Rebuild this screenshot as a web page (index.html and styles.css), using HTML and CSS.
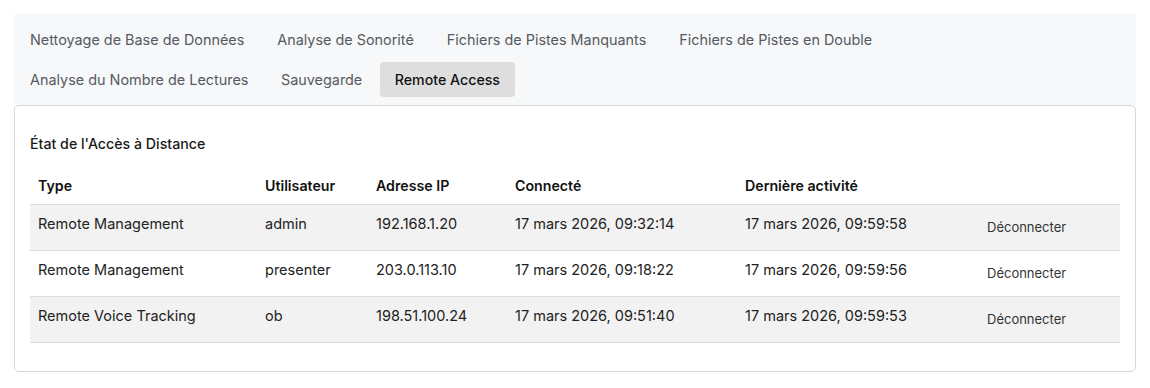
FILE: index.html
```html
<!DOCTYPE html>
<html lang="fr">
<head>
<meta charset="utf-8">
<title>Remote Access</title>
<link rel="stylesheet" href="styles.css">
</head>
<body>
<div class="page">
  <nav class="tabs">
    <div class="tab-row">
      <span class="tab">Nettoyage de Base de Données</span>
      <span class="tab">Analyse de Sonorité</span>
      <span class="tab">Fichiers de Pistes Manquants</span>
      <span class="tab">Fichiers de Pistes en Double</span>
    </div>
    <div class="tab-row">
      <span class="tab">Analyse du Nombre de Lectures</span>
      <span class="tab">Sauvegarde</span>
      <span class="tab active">Remote Access</span>
    </div>
  </nav>
  <section class="card">
    <h2 class="card-title">État de l'Accès à Distance</h2>
    <table class="sessions">
      <colgroup>
        <col class="c-type"><col class="c-user"><col class="c-ip"><col class="c-conn"><col class="c-last"><col class="c-act">
      </colgroup>
      <thead>
        <tr><th>Type</th><th>Utilisateur</th><th>Adresse IP</th><th>Connecté</th><th>Dernière activité</th><th></th></tr>
      </thead>
      <tbody>
        <tr>
          <td>Remote Management</td><td>admin</td><td>192.168.1.20</td><td>17 mars 2026, 09:32:14</td><td>17 mars 2026, 09:59:58</td>
          <td class="act"><button class="btn">Déconnecter</button></td>
        </tr>
        <tr>
          <td>Remote Management</td><td>presenter</td><td>203.0.113.10</td><td>17 mars 2026, 09:18:22</td><td>17 mars 2026, 09:59:56</td>
          <td class="act"><button class="btn">Déconnecter</button></td>
        </tr>
        <tr>
          <td>Remote Voice Tracking</td><td>ob</td><td>198.51.100.24</td><td>17 mars 2026, 09:51:40</td><td>17 mars 2026, 09:59:53</td>
          <td class="act"><button class="btn">Déconnecter</button></td>
        </tr>
      </tbody>
    </table>
  </section>
</div>
</body>
</html>
```

FILE: styles.css
```css
* { box-sizing: border-box; }
html, body { margin: 0; background: #ffffff; }
body {
  padding: 14px;
  font-family: Inter, "Noto Sans", "Liberation Sans", sans-serif;
  font-size: 14px;
  color: #1f1f1f;
}
.page { width: 1122px; }
.tabs {
  background: #f7f8fa;
  padding: 8px 0 8px 1px;
  display: flex;
  flex-direction: column;
  gap: 5px;
}
.tab-row { display: flex; gap: 3px; }
.tab-row + .tab-row { gap: 2.5px; }
.tab {
  padding: 8px 15px;
  font-size: 14.4px;
  line-height: 19px;
  color: #555a60;
  border-radius: 4px;
  white-space: nowrap;
}
.tab.active {
  background: #dedede;
  color: #111111;
  font-size: 14.2px;
  font-weight: 500;
}
.card {
  border: 1px solid #d6d6d6;
  border-radius: 5px;
  padding: 28px 15px 28px 15px;
  background: #fff;
}
.card-title {
  margin: 0 0 14px 0;
  font-size: 14.2px;
  line-height: 20px;
  font-weight: 500;
  color: #1a1a1a;
}
.sessions {
  width: 100%;
  border-collapse: collapse;
  table-layout: fixed;
}
.c-type { width: 227px; }
.c-user { width: 111px; }
.c-ip { width: 139px; }
.c-conn { width: 230px; }
.c-last { width: 234px; }
.c-act { width: 149px; }
.sessions th {
  text-align: left;
  font-size: 14.2px;
  font-weight: 600;
  color: #111;
  padding: 8px 8px;
  line-height: 20px;
  border-bottom: 1px solid #dddddd;
}
.sessions td {
  padding: 9px 8px 0 8px;
  height: 46px;
  font-size: 14.5px;
  line-height: 20px;
  vertical-align: top;
  color: #222;
  border-bottom: 1px solid #dddddd;
  white-space: nowrap;
}
.sessions tbody tr:nth-child(odd) td { background: #f2f2f2; }
.sessions td.act { padding: 7px 8px 0 8px; }
.btn {
  font-family: inherit;
  font-size: 13px;
  line-height: 18px;
  color: #333;
  background: transparent;
  border: none;
  padding: 6px 8px;
  cursor: pointer;
}
```
